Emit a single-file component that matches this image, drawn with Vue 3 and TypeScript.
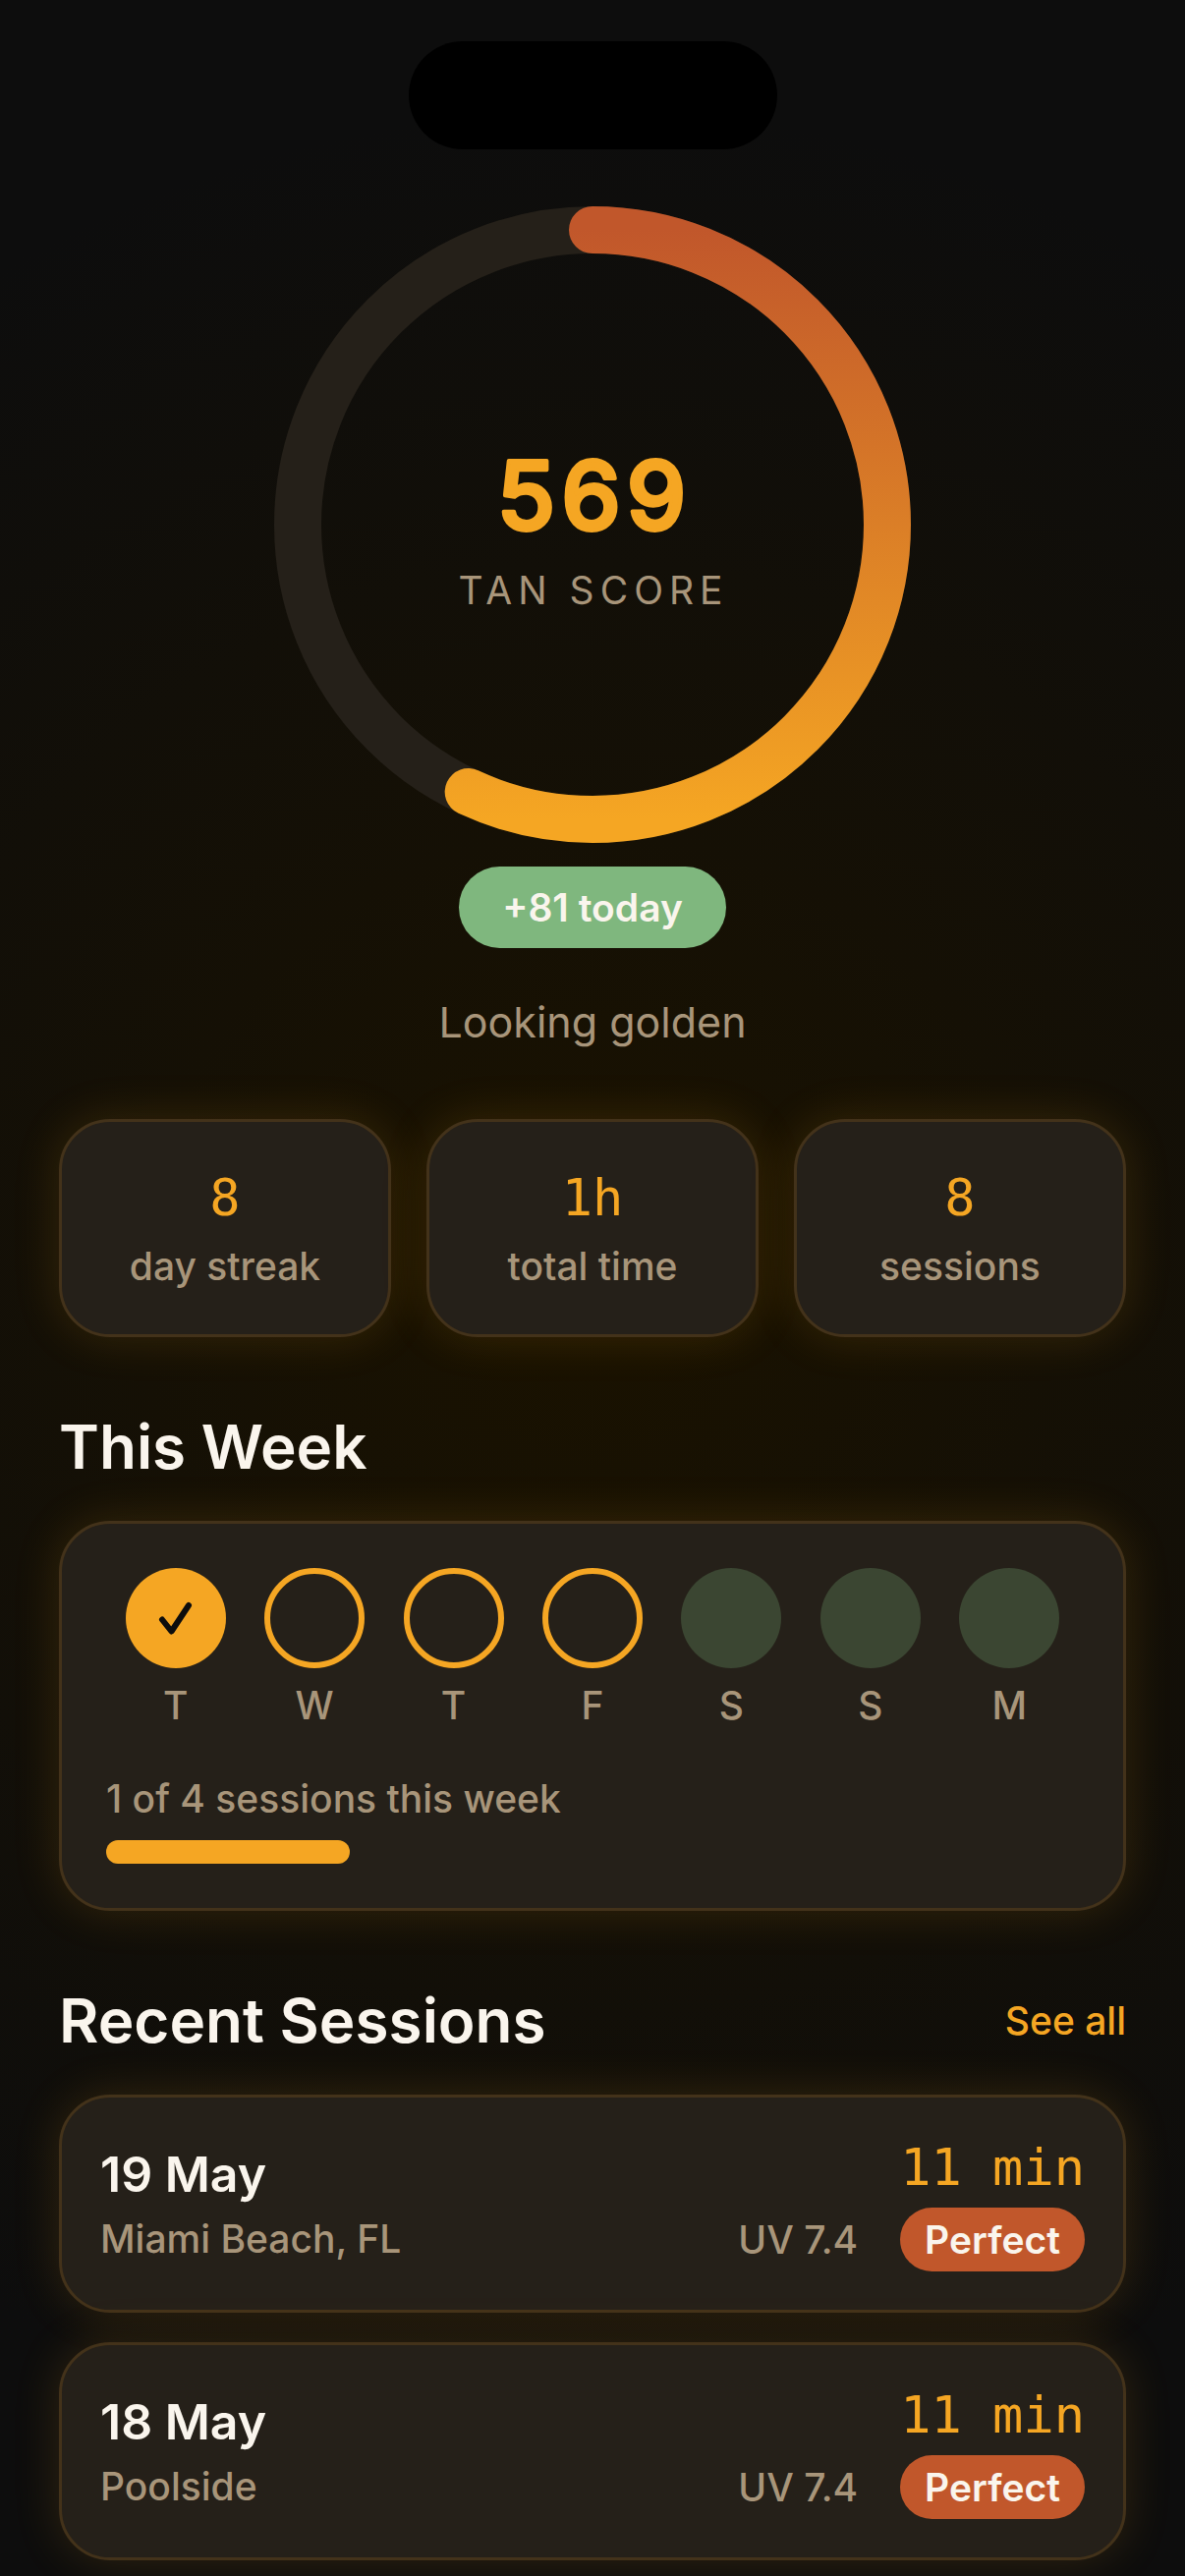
<script setup lang="ts">
interface Stat { value: string; label: string }
interface Day { letter: string; state: 'done' | 'planned' | 'rest' }
interface Session { date: string; place: string; uv: string; duration: string; rating: string }

const score = 569
const radius = 300
const circumference = 2 * Math.PI * radius
const arc = `${(circumference * score) / 1000} ${circumference}`

const stats: Stat[] = [
  { value: '8', label: 'day streak' },
  { value: '1h', label: 'total time' },
  { value: '8', label: 'sessions' },
]

const days: Day[] = [
  { letter: 'T', state: 'done' },
  { letter: 'W', state: 'planned' },
  { letter: 'T', state: 'planned' },
  { letter: 'F', state: 'planned' },
  { letter: 'S', state: 'rest' },
  { letter: 'S', state: 'rest' },
  { letter: 'M', state: 'rest' },
]

const completed = 1
const goal = 4

const sessions: Session[] = [
  { date: '19 May', place: 'Miami Beach, FL', uv: 'UV 7.4', duration: '11 min', rating: 'Perfect' },
  { date: '18 May', place: 'Poolside', uv: 'UV 7.4', duration: '11 min', rating: 'Perfect' },
]
</script>

<template>
  <main class="screen">
    <div class="island" aria-hidden="true"></div>

    <section class="hero">
      <svg class="ring" viewBox="0 0 648 648" role="img" aria-labelledby="score-value score-label">
        <defs>
          <linearGradient id="sunset" gradientUnits="userSpaceOnUse" x1="0" y1="24" x2="0" y2="624">
            <stop offset="0" stop-color="#c1572b" />
            <stop offset="1" stop-color="#f5a623" />
          </linearGradient>
          <mask id="arc-mask" maskUnits="userSpaceOnUse" x="0" y="0" width="648" height="648">
            <circle
              cx="324" cy="324" :r="radius" fill="none" stroke="#fff" stroke-width="48"
              stroke-linecap="round" :stroke-dasharray="arc" transform="rotate(-90 324 324)"
            />
          </mask>
        </defs>
        <circle cx="324" cy="324" :r="radius" fill="none" stroke="#252019" stroke-width="48" />
        <rect width="648" height="648" fill="url(#sunset)" mask="url(#arc-mask)" />
        <text id="score-value" class="score" x="326" y="329" text-anchor="middle">{{ score }}</text>
        <text id="score-label" class="score-label" x="325" y="405" text-anchor="middle">TAN SCORE</text>
      </svg>
      <span class="delta">+81 today</span>
      <p class="message">Looking golden</p>
    </section>

    <dl class="stats">
      <div v-for="stat in stats" :key="stat.label" class="card stat">
        <dt class="caption">{{ stat.label }}</dt>
        <dd class="mono">{{ stat.value }}</dd>
      </div>
    </dl>

    <section class="block">
      <h2 class="title">This Week</h2>
      <div class="card week">
        <ul class="days">
          <li v-for="(day, i) in days" :key="i" class="day">
            <span class="dot" :class="day.state">
              <svg v-if="day.state === 'done'" viewBox="0 0 102 102" aria-hidden="true">
                <path
                  d="M37 52.500L46.500 64.500L64 38" fill="none" stroke="#0d0d0d" stroke-width="6"
                  stroke-linecap="round" stroke-linejoin="round"
                />
              </svg>
            </span>
            <span class="caption">{{ day.letter }}</span>
          </li>
        </ul>
        <p id="goal" class="caption goal">{{ completed }} of {{ goal }} sessions this week</p>
        <div
          class="progress" role="progressbar" aria-labelledby="goal"
          :aria-valuenow="completed" aria-valuemin="0" :aria-valuemax="goal"
        >
          <div class="fill" :style="{ width: `${(completed / goal) * 100}%` }"></div>
        </div>
      </div>
    </section>

    <section class="block">
      <header class="heading">
        <h2 class="title">Recent Sessions</h2>
        <a class="see-all" href="#sessions">See all</a>
      </header>
      <ul id="sessions" class="sessions">
        <li v-for="session in sessions" :key="session.date" class="card session">
          <div class="where">
            <h3 class="date">{{ session.date }}</h3>
            <p class="caption">{{ session.place }}</p>
          </div>
          <div class="result">
            <span class="mono">{{ session.duration }}</span>
            <div class="rating">
              <span class="caption">{{ session.uv }}</span>
              <span class="badge">{{ session.rating }}</span>
            </div>
          </div>
        </li>
      </ul>
    </section>
  </main>
</template>

<style>
html {
  background: #0d0d0d;
}
</style>

<style scoped>
.screen {
  box-sizing: border-box;
  min-height: 100vh;
  padding: 42px 60px 16px;
  display: flex;
  flex-direction: column;
  background: radial-gradient(circle 1200px at 50% 50%, #1a1200, #0d0d0d);
  color: #faf5ed;
  font-family: Inter, "Liberation Sans", sans-serif;
  overflow: hidden;
}

h2, h3, p, ul, dl, dd {
  margin: 0;
  padding: 0;
  list-style: none;
}

.island {
  align-self: center;
  width: 375px;
  height: 110px;
  border-radius: 55px;
  background: #000;
}

.hero {
  display: flex;
  flex-direction: column;
  align-items: center;
  margin-top: 58px;
}

.ring {
  display: block;
  width: 648px;
  max-width: 100%;
}

.score {
  fill: #f5a623;
  stroke: #f5a623;
  stroke-width: 4px;
  stroke-linejoin: round;
  font-size: 96px;
  font-weight: 500;
  letter-spacing: 6px;
}

.score-label {
  fill: #a8957a;
  font-size: 39px;
  font-weight: 400;
  letter-spacing: 6px;
}

.delta {
  margin-top: 24px;
  padding: 0 44px;
  border-radius: 42px;
  background: #7fb77e;
  font-size: 39px;
  font-weight: 600;
  line-height: 83px;
}

.message {
  margin-top: 48px;
  color: #a8957a;
  font-size: 43px;
  line-height: 54px;
}

.card {
  box-sizing: border-box;
  border: 3px solid #43321a;
  border-radius: 52px;
  background: #252019;
  box-shadow: 0 0 48px rgba(245, 166, 35, 0.15);
}

.caption {
  color: #a8957a;
  font-size: 39px;
  font-weight: 450;
  line-height: 48px;
}

.mono {
  color: #f5a623;
  font-family: "DejaVu Sans Mono", monospace;
  font-size: 52px;
  line-height: 64px;
}

.stats {
  display: flex;
  gap: 36px;
  margin-top: 72px;
}

.stat {
  flex: 1;
  display: flex;
  flex-direction: column-reverse;
  align-items: center;
  gap: 14px;
  padding: 45px 0;
}

.block {
  margin-top: 72px;
}

.title {
  font-size: 62px;
  font-weight: 600;
  line-height: 80px;
}

.week {
  margin-top: 35px;
  padding: 45px;
}

.days {
  display: flex;
}

.day {
  flex: 1;
  display: flex;
  flex-direction: column;
  align-items: center;
  gap: 14px;
}

.dot {
  box-sizing: border-box;
  width: 102px;
  height: 102px;
  border-radius: 50%;
}

.dot svg {
  display: block;
}

.done {
  background: #f5a623;
}

.planned {
  border: 6px solid #f5a623;
}

.rest {
  background: #3b4632;
}

.goal {
  margin-top: 47px;
}

.progress {
  height: 24px;
  margin-top: 18px;
}

.fill {
  height: 100%;
  border-radius: 12px;
  background: #f5a623;
}

.heading {
  display: flex;
  align-items: center;
  justify-content: space-between;
}

.see-all {
  color: #f5a623;
  font-size: 39px;
  font-weight: 500;
  line-height: 48px;
  text-decoration: none;
}

.sessions {
  display: flex;
  flex-direction: column;
  gap: 30px;
  margin-top: 35px;
}

.session {
  display: flex;
  align-items: center;
  justify-content: space-between;
  padding: 39px;
}

.where {
  display: flex;
  flex-direction: column;
  gap: 12px;
}

.date {
  font-size: 50px;
  font-weight: 600;
  line-height: 60px;
}

.result {
  display: flex;
  flex-direction: column;
  align-items: flex-end;
  gap: 9px;
}

.rating {
  display: flex;
  align-items: center;
  gap: 43px;
}

.badge {
  padding: 0 25px;
  border-radius: 33px;
  background: #c1572b;
  font-size: 39px;
  font-weight: 600;
  line-height: 65px;
}
</style>
